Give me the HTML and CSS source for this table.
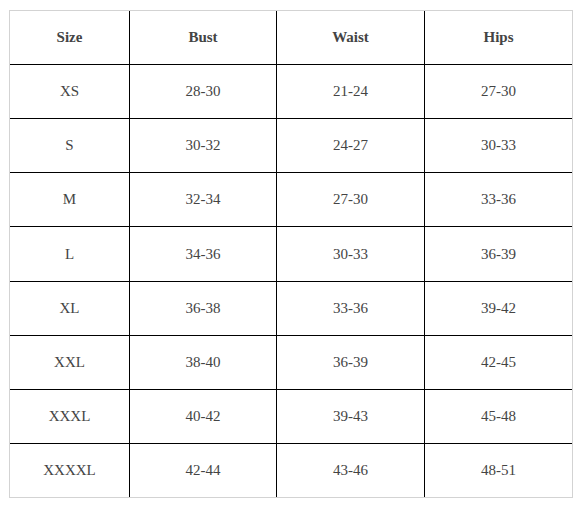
FILE: index.html
```html
<!DOCTYPE html>
<html>
<head>
<meta charset="utf-8">
<link rel="stylesheet" href="styles.css">
</head>
<body>
<div class="wrap">
<table class="chart">
<colgroup><col class="c1"><col class="c2"><col class="c3"><col class="c4"></colgroup>
<thead>
<tr><th>Size</th><th>Bust</th><th>Waist</th><th>Hips</th></tr>
</thead>
<tbody>
<tr><td>XS</td><td>28-30</td><td>21-24</td><td>27-30</td></tr>
<tr><td>S</td><td>30-32</td><td>24-27</td><td>30-33</td></tr>
<tr><td>M</td><td>32-34</td><td>27-30</td><td>33-36</td></tr>
<tr class="tall"><td>L</td><td>34-36</td><td>30-33</td><td>36-39</td></tr>
<tr><td>XL</td><td>36-38</td><td>33-36</td><td>39-42</td></tr>
<tr><td>XXL</td><td>38-40</td><td>36-39</td><td>42-45</td></tr>
<tr><td>XXXL</td><td>40-42</td><td>39-43</td><td>45-48</td></tr>
<tr><td>XXXXL</td><td>42-44</td><td>43-46</td><td>48-51</td></tr>
</tbody>
</table>
</div>
</body>
</html>
```
FILE: styles.css
```css
html, body { margin: 0; padding: 0; background: #fff; }
.wrap { padding: 10px 9px; }
.chart {
  width: 564px;
  border-collapse: separate;
  border-spacing: 0;
  border: 1px solid #d3d3d3;
  table-layout: fixed;
  font-family: "Liberation Serif", "Times New Roman", serif;
  font-size: 15px;
  color: #444;
}
.c1 { width: 120px; }
.c2 { width: 147px; }
.c3 { width: 148px; }
.c4 { width: 147px; }
.chart th, .chart td {
  height: 54px;
  padding: 0;
  text-align: center;
  vertical-align: middle;
  border-right: 1px solid #000;
  border-bottom: 1px solid #000;
  box-sizing: border-box;
}
.chart th { font-weight: bold; }
.chart tr > :last-child { border-right: none; }
.chart tbody tr:last-child td { border-bottom: none; height: 53px; }
.chart tr.tall td { height: 55px; }
```
